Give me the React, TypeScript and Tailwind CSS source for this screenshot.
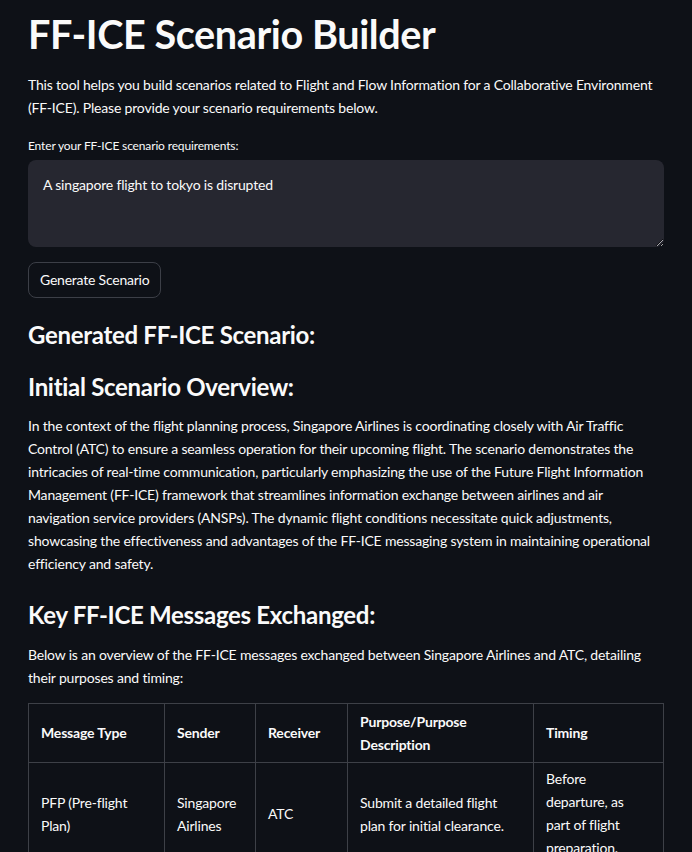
import React from "react"

const font = { fontFamily: '"Source Sans Pro", Lato, "Noto Sans", sans-serif' }

const rows = [
  {
    type: "PFP (Pre-flight Plan)",
    sender: "Singapore Airlines",
    receiver: "ATC",
    purpose: "Submit a detailed flight plan for initial clearance.",
    timing: "Before departure, as part of flight preparation.",
  },
]

const cell = "border border-[#3d4047] px-[12px] py-[6px] text-left align-middle"

export default function App() {
  return (
    <div
      className="min-h-screen bg-[#0e1117] text-[#fafafa] px-[28px] pt-[6px] pb-10 text-[14px] tracking-[-0.18px]"
      style={font}
    >
      <h1 className="text-[39.6px] font-bold leading-[1.2] tracking-[-0.4px] py-[4px]">
        FF-ICE Scenario Builder
      </h1>

      <p className="mt-[11px] leading-[23px]">
        This tool helps you build scenarios related to Flight and Flow Information for a
        Collaborative Environment (FF-ICE). Please provide your scenario requirements below.
      </p>

      <label className="block mt-[18px] text-[12px] tracking-[-0.15px] leading-[18px]">
        Enter your FF-ICE scenario requirements:
      </label>
      <textarea
        className="mt-[5px] block w-full h-[87px] rounded-[8px] bg-[#262730] text-[#fafafa] text-[14px] tracking-[-0.18px] leading-[23px] px-[15px] py-[13px] outline-none resize-y"
        style={font}
        defaultValue="A singapore flight to tokyo is disrupted"
      />

      <button
        className="mt-[15px] h-[36px] px-[11px] rounded-[8px] border border-[#3c3f47] bg-[#0e1117] text-[14px] tracking-[-0.22px] text-[#fafafa]"
        style={font}
      >
        Generate Scenario
      </button>

      <h3 className="mt-[18px] text-[24px] font-bold leading-[30px] tracking-[-0.3px] py-[4px]">
        Generated FF-ICE Scenario:
      </h3>

      <h3 className="mt-[14px] text-[24px] font-bold leading-[30px] tracking-[-0.3px] py-[4px]">
        Initial Scenario Overview:
      </h3>
      <p className="mt-[8px] leading-[23px]">
        In the context of the flight planning process, Singapore Airlines is coordinating
        closely with Air Traffic Control (ATC) to ensure a seamless operation for their upcoming
        flight. The scenario demonstrates the intricacies of real-time communication,
        particularly emphasizing the use of the Future Flight Information Management (FF-ICE)
        framework that streamlines information exchange between airlines and air navigation
        service providers (ANSPs). The dynamic flight conditions necessitate quick adjustments,
        showcasing the effectiveness and advantages of the FF-ICE messaging system in maintaining
        operational efficiency and safety.
      </p>

      <h3 className="mt-[21px] text-[24px] font-bold leading-[30px] tracking-[-0.3px] py-[4px]">
        Key FF-ICE Messages Exchanged:
      </h3>
      <p className="mt-[9px] leading-[23px]">
        Below is an overview of the FF-ICE messages exchanged between Singapore Airlines and
        ATC, detailing their purposes and timing:
      </p>

      <table className="mt-[14px] w-full table-fixed border-collapse leading-[23px]">
        <colgroup>
          <col className="w-[136px]" />
          <col className="w-[91px]" />
          <col className="w-[92px]" />
          <col className="w-[186px]" />
          <col />
        </colgroup>
        <thead>
          <tr>
            {["Message Type", "Sender", "Receiver", "Purpose/Purpose Description", "Timing"].map(
              (h) => (
                <th key={h} className={`${cell} font-bold`}>
                  {h}
                </th>
              )
            )}
          </tr>
        </thead>
        <tbody>
          {rows.map((r) => (
            <tr key={r.type}>
              <td className={cell}>{r.type}</td>
              <td className={cell}>{r.sender}</td>
              <td className={cell}>{r.receiver}</td>
              <td className={cell}>{r.purpose}</td>
              <td className={`${cell} pr-[18px] pt-[4px]`}>{r.timing}</td>
            </tr>
          ))}
        </tbody>
      </table>
    </div>
  )
}
